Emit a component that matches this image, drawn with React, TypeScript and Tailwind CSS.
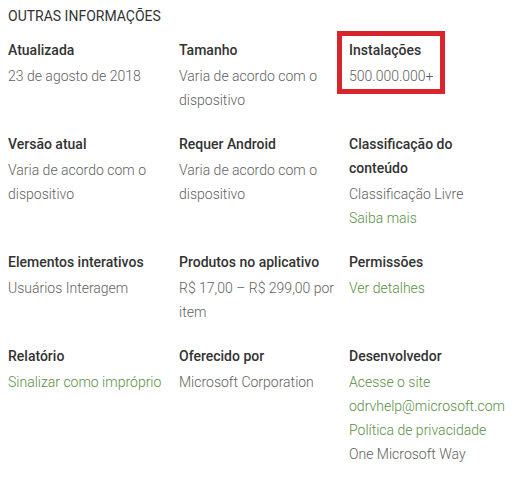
const rows = [
  [
    { label: 'Atualizada', values: [{ text: '23 de agosto de 2018' }] },
    { label: 'Tamanho', values: [{ text: 'Varia de acordo com o dispositivo' }] },
    { label: 'Instalações', values: [{ text: '500.000.000+' }], highlight: true },
  ],
  [
    { label: 'Versão atual', values: [{ text: 'Varia de acordo com o dispositivo' }] },
    { label: 'Requer Android', values: [{ text: 'Varia de acordo com o dispositivo' }] },
    {
      label: 'Classificação do conteúdo',
      values: [{ text: 'Classificação Livre' }, { text: 'Saiba mais', link: true }],
    },
  ],
  [
    { label: 'Elementos interativos', values: [{ text: 'Usuários Interagem' }] },
    { label: 'Produtos no aplicativo', values: [{ text: 'R$ 17,00 – R$ 299,00 por item' }] },
    { label: 'Permissões', values: [{ text: 'Ver detalhes', link: true }] },
  ],
  [
    { label: 'Relatório', values: [{ text: 'Sinalizar como impróprio', link: true }] },
    { label: 'Oferecido por', values: [{ text: 'Microsoft Corporation' }] },
    {
      label: 'Desenvolvedor',
      values: [
        { text: 'Acesse o site', link: true },
        { text: 'odrvhelp@microsoft.com', link: true },
        { text: 'Política de privacidade', link: true },
        { text: 'One Microsoft Way' },
      ],
    },
  ],
];

const App = () => {
  return (
    <div className="min-h-[477px] bg-white pl-2 pt-1 font-['Roboto',sans-serif] text-[14px]">
      {/* Header */}
      <h2 className="text-[14px] leading-6 font-normal uppercase text-[#333]">Outras informações</h2>

      <div className="mt-[10px] flex flex-col gap-5">
        {rows.map((row, i) => (
          <div key={i} className="grid grid-cols-[171px_170px_160px]">
            {row.map((cell) => (
              <div key={cell.label} className="relative pr-[10px]">
                {cell.highlight && (
                  <div className="absolute -left-3 -top-[7px] h-[63px] w-[108px] border-[5px] border-[#d9232d]" />
                )}
                <div className="leading-6 font-medium text-[#333]">{cell.label}</div>
                <div className="mt-[2px]">
                  {cell.values.map((v) => (
                    <div
                      key={v.text}
                      className={`leading-6 font-light ${v.link ? 'text-[#5a8e44]' : 'text-[#616161]'}`}
                    >
                      {v.text}
                    </div>
                  ))}
                </div>
              </div>
            ))}
          </div>
        ))}
      </div>
    </div>
  );
};

export default App;
